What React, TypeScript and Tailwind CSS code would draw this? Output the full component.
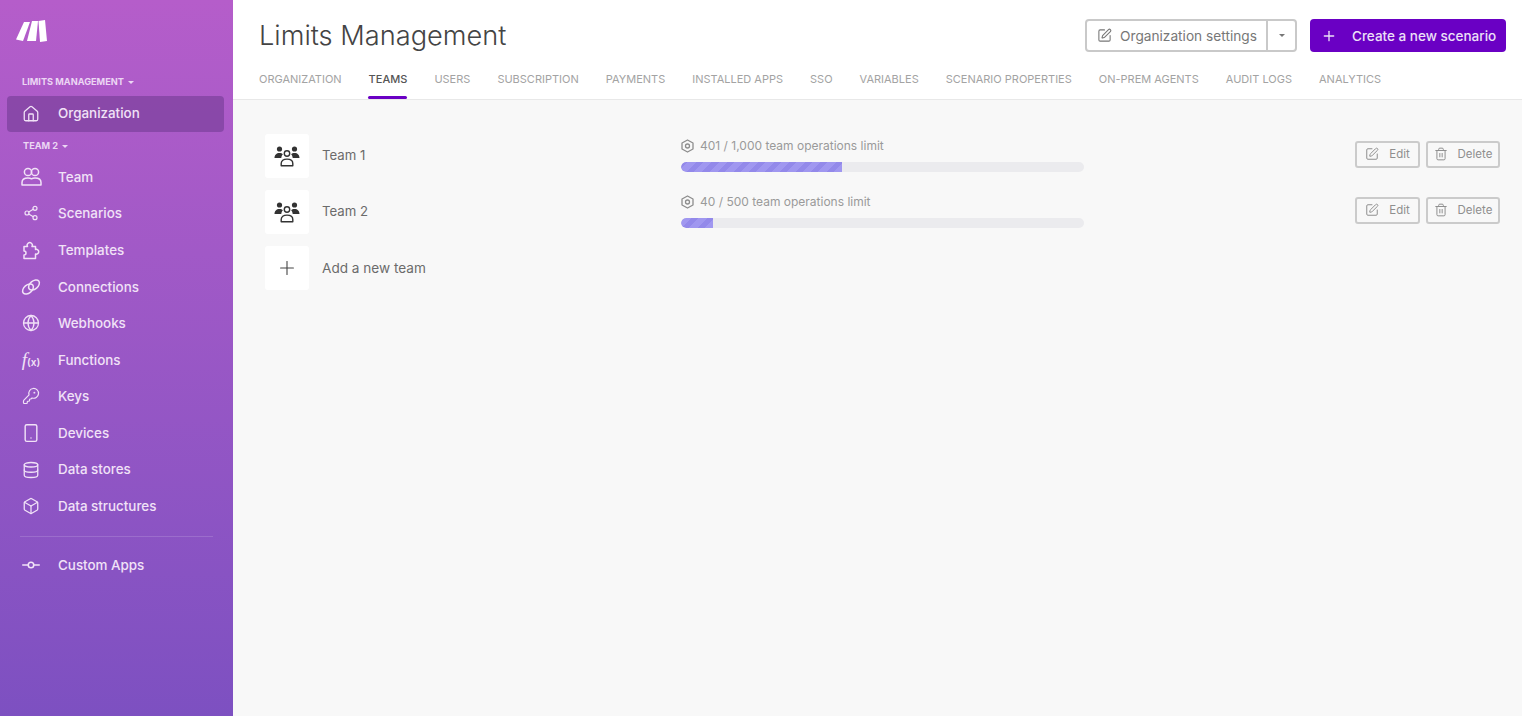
import { Box, Database, GitCommitHorizontal, Globe, House, KeyRound, Plus, Share2, Smartphone, SquarePen, Trash2 } from 'lucide-react'
import type { ReactNode } from 'react'

const tabs = ['Organization', 'Teams', 'Users', 'Subscription', 'Payments', 'Installed apps', 'SSO', 'Variables', 'Scenario properties', 'On-prem agents', 'Audit logs', 'Analytics']

const iconClass = 'w-[18px] h-[18px]'

function TeamNavIcon() {
  return (
    <svg width="21" height="19" viewBox="0 0 21 19" fill="none" stroke="currentColor" strokeWidth="1.5" strokeLinejoin="round">
      <circle cx="7" cy="5" r="3.6" />
      <circle cx="14" cy="5" r="3.6" />
      <path d="M1 18v-2.5C1 12.5 3.5 11 7 11c1.5 0 2.7.3 3.5.8.8-.5 2-.8 3.5-.8 3.5 0 6 1.500 6 4.500V18Z" />
    </svg>
  )
}

function TemplatesIcon() {
  return (
    <svg width="20" height="20" viewBox="0 0 20 20" fill="none" stroke="currentColor" strokeWidth="1.5" strokeLinejoin="round">
      <path d="M3 6.500h3.500a2.600 2.600 0 1 1 4.500 0H14.500v3a2.400 2.400 0 1 1 0 4.500v4.500H3v-3.500a2 2 0 0 0 0-4Z" />
    </svg>
  )
}

function ConnectionsIcon() {
  return (
    <svg width="20" height="18" viewBox="0 0 20 18" fill="none" stroke="currentColor" strokeWidth="1.5">
      <ellipse cx="7" cy="11" rx="6.200" ry="4" transform="rotate(-40 7 11)" />
      <ellipse cx="13" cy="7" rx="6.200" ry="4" transform="rotate(-40 13 7)" />
    </svg>
  )
}

const navItems: { label: string; icon: ReactNode }[] = [
  { label: 'Team', icon: <TeamNavIcon /> },
  { label: 'Scenarios', icon: <Share2 className="w-[16px] h-[16px]" strokeWidth={1.8} /> },
  { label: 'Templates', icon: <TemplatesIcon /> },
  { label: 'Connections', icon: <ConnectionsIcon /> },
  { label: 'Webhooks', icon: <Globe className={iconClass} strokeWidth={1.7} /> },
  { label: 'Functions', icon: <span className="font-['Liberation_Serif',serif] italic text-[19px] leading-none whitespace-nowrap">f<span className="font-['Inter',sans-serif] text-[10px] font-semibold not-italic">(x)</span></span> },
  { label: 'Keys', icon: <KeyRound className={iconClass} strokeWidth={1.6} /> },
  { label: 'Devices', icon: <Smartphone className="w-5 h-5" strokeWidth={1.7} /> },
  { label: 'Data stores', icon: <Database className={iconClass} strokeWidth={1.7} /> },
  { label: 'Data structures', icon: <Box className={iconClass} strokeWidth={1.7} /> },
]

function Caret() {
  return <span className="inline-block w-0 h-0 border-x-[3.5px] border-x-transparent border-t-[3.5px] border-t-current" />
}

function Logo() {
  return (
    <svg width="32" height="22" viewBox="0 0 32 22" fill="white">
      <path d="M8 2 L14 2 L7 21 L0 19.500 Z" />
      <path d="M16 1 L22 1 L20 21 L11 21 Z" />
      <path d="M22.500 1 L29 0 L31 21 L24 22 Z" />
    </svg>
  )
}

function TeamIcon() {
  return (
    <svg width="26" height="22" viewBox="0 0 26 22" fill="#333">
      <circle cx="5.500" cy="4" r="2.600" />
      <circle cx="20.500" cy="4" r="2.600" />
      <path d="M0.500 13c0-3 2-5 5-5 1.500 0 2.600.4 3.400 1.200-1 1-1.500 2.300-1.600 3.800Z" />
      <path d="M25.500 13c0-3-2-5-5-5-1.500 0-2.600.4-3.400 1.200 1 1 1.500 2.300 1.600 3.800Z" />
      <circle cx="13" cy="8.500" r="2.700" fill="none" stroke="#333" strokeWidth="1.400" />
      <path d="M7.200 20.800v-2.300c0-2.700 2.200-4.400 5.800-4.400s5.800 1.700 5.800 4.400v2.300Z" fill="none" stroke="#333" strokeWidth="1.400" strokeLinejoin="round" />
    </svg>
  )
}

function OpsIcon() {
  return (
    <svg width="13" height="14" viewBox="0 0 13 14" fill="none" stroke="#8d8d8d" strokeWidth="1.300" className="shrink-0">
      <path d="M6.500 1 L12 4 V10 L6.500 13 L1 10 V4 Z" strokeLinejoin="round" />
      <circle cx="6.500" cy="7" r="2" />
    </svg>
  )
}

function NavRow({ label, icon }: { label: string; icon: ReactNode }) {
  return (
    <div className="h-[36.6px] flex items-center pl-[20px] text-[13.4px] font-medium text-[#f1e2f7]">
      <span className="w-[22px] flex justify-center shrink-0">{icon}</span>
      <span className="ml-[16px]">{label}</span>
    </div>
  )
}

function OutlineButton({ icon, label, width }: { icon: ReactNode; label: string; width: string }) {
  return (
    <button className={`${width} h-[27px] flex items-center justify-center gap-[10px] rounded-[3px] border-2 border-[#cbcbcb] text-[11.5px] text-[#8f8f8f]`}>
      {icon}
      <span className="pt-[1px]">{label}</span>
    </button>
  )
}

function TeamRow({ name, used, limit, percent }: { name: string; used: string; limit: string; percent: number }) {
  return (
    <div className="h-[44px] flex items-center">
      <div className="w-[44px] h-[44px] bg-white rounded-[3px] flex items-center justify-center shrink-0">
        <TeamIcon />
      </div>
      <span className="ml-[13px] w-[359px] text-[13.2px] text-[#6b6b6b]">{name}</span>
      <div className="w-[403px] mb-[2px]">
        <div className="flex items-center gap-[6px] text-[12px] text-[#9a9a9a] leading-[16px]">
          <OpsIcon />
          {used} / {limit} team operations limit
        </div>
        <div className="mt-[8px] h-[10px] rounded-full bg-[#ebebee] overflow-hidden">
          <div
            className="h-full rounded-l-full bg-[repeating-linear-gradient(-45deg,#a097f0_0px,#a097f0_6px,#9389ea_6px,#9389ea_11px)]"
            style={{ width: `${percent}%` }}
          />
        </div>
      </div>
      <div className="ml-auto flex items-center gap-[6px] mb-[4px]">
        <OutlineButton icon={<SquarePen className="w-[14px] h-[14px]" strokeWidth={1.7} />} label="Edit" width="w-[65px]" />
        <OutlineButton icon={<Trash2 className="w-[14px] h-[14px]" strokeWidth={1.7} />} label="Delete" width="w-[74px]" />
      </div>
    </div>
  )
}

export default function App() {
  return (
    <div className="w-[1522px] h-[716px] flex overflow-hidden bg-[#f8f8f8] font-['Inter',sans-serif]">
      <aside className="w-[233px] shrink-0 bg-gradient-to-b from-[#b55dca] to-[#7d50c1] flex flex-col">
        <div className="h-[75px] pl-[16px] pt-[20px] shrink-0">
          <Logo />
        </div>
        <div className="h-[14px] pl-[22px] flex items-center gap-[4px] text-[9.2px] font-bold text-[#ecd6f4] uppercase">
          Limits Management
          <Caret />
        </div>
        <div className="ml-[7px] mr-[9px] mt-[7px] h-[36px] pb-[1px] rounded-[4px] bg-[#8143a1]/80 flex items-center pl-[13px] text-[13.4px] font-medium text-[#f1e2f7]">
          <span className="w-[22px] flex justify-center shrink-0">
            <House className={iconClass} strokeWidth={1.7} />
          </span>
          <span className="ml-[16px]">Organization</span>
        </div>
        <div className="h-[14px] mt-[7px] mb-[5.5px] pl-[23px] flex items-center gap-[4px] text-[9.2px] font-bold text-[#ecd6f4] uppercase">
          Team 2
          <Caret />
        </div>
        {navItems.map((item) => (
          <NavRow key={item.label} label={item.label} icon={item.icon} />
        ))}
        <div className="mx-[20px] mt-[12px] mb-[9px] border-t border-white/15" />
        <NavRow label="Custom Apps" icon={<GitCommitHorizontal className="w-[22px] h-[22px]" strokeWidth={1.7} />} />
      </aside>

      <main className="flex-1 min-w-0 flex flex-col">
        <header className="h-[100px] shrink-0 bg-white border-b border-[#e8e8e8] pl-[26px] pr-[16px] flex flex-col">
          <div className="h-[71px] flex items-center justify-between shrink-0">
            <h1 className="text-[27.2px] font-light text-[#444] leading-none">Limits Management</h1>
            <div className="flex items-center gap-[13px]">
              <div className="h-[33px] flex rounded-[4px] border-2 border-[#c9c9c9] text-[13.7px] text-[#777]">
                <div className="w-[181px] flex items-center pl-[10px] gap-[8px] border-r-2 border-[#c9c9c9]">
                  <SquarePen className="w-[15px] h-[15px]" strokeWidth={1.7} />
                  <span className="pt-[1px] whitespace-nowrap">Organization settings</span>
                </div>
                <div className="w-[27px] flex items-center justify-center">
                  <Caret />
                </div>
              </div>
              <button className="w-[196px] h-[33px] rounded-[4px] bg-[#6a00c4] flex items-center pl-[11px] text-[13.5px] font-medium text-[#ece0f7]">
                <Plus className="w-[16px] h-[16px]" strokeWidth={2} />
                <span className="ml-[15px] pt-[1px] whitespace-nowrap">Create a new scenario</span>
              </button>
            </div>
          </div>
          <nav className="flex gap-[27px] text-[11px] uppercase text-[#a3a3a3] h-[28px]">
            {tabs.map((tab) => (
              <div
                key={tab}
                className={`relative whitespace-nowrap ${tab === 'Teams' ? 'font-medium text-[#555]' : ''}`}
              >
                {tab}
                {tab === 'Teams' && <span className="absolute -left-[1px] right-0 bottom-0 h-[3px] rounded-full bg-[#6a00c4]" />}
              </div>
            ))}
          </nav>
        </header>

        <section className="pl-[32px] pr-[22px] pt-[34px] flex flex-col gap-[12px]">
          <TeamRow name="Team 1" used="401" limit="1,000" percent={40} />
          <TeamRow name="Team 2" used="40" limit="500" percent={8} />
          <div className="h-[44px] flex items-center">
            <div className="w-[44px] h-[44px] bg-white rounded-[3px] flex items-center justify-center">
              <Plus className="w-[22px] h-[22px] text-[#444]" strokeWidth={1.2} />
            </div>
            <span className="ml-[13px] text-[13.6px] text-[#6b6b6b]">Add a new team</span>
          </div>
        </section>
      </main>
    </div>
  )
}
